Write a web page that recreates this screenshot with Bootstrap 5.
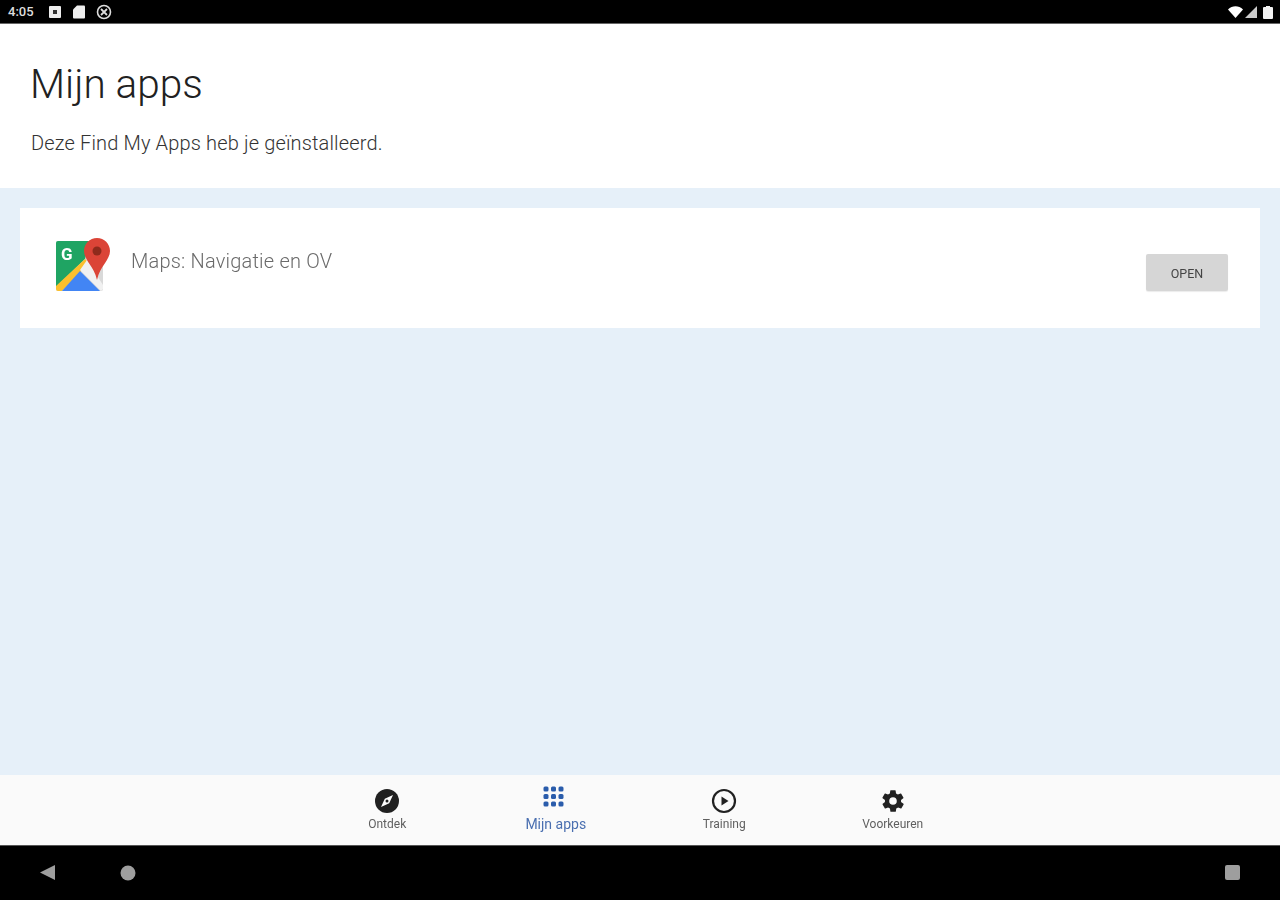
<!DOCTYPE html>
<html lang="nl">

<head>
    <meta charset="UTF-8">
    <meta name="viewport" content="width=device-width, initial-scale=1.0">
    <title>Mijn apps</title>
    <link href="https://cdn.jsdelivr.net/npm/bootstrap@5.3.0/dist/css/bootstrap.min.css" rel="stylesheet">
    <style>
        html, body { height: 900px; overflow: hidden; }
        body { font-family: Roboto, "Liberation Sans", sans-serif; background: #e6f0f9; color: #212121; }
        .screen { height: 900px; filter: blur(.7px); }
        .status-bar { height: 24px; background: #000; color: #ddd; font-size: 13px; font-weight: 500; padding: 0 7px 0 8px; box-shadow: inset 0 -1px 0 #666; }
        .status-time { width: 27px; }
        .status-left { gap: 10px; }
        .status-first { margin-left: 3px; }
        .status-right { gap: 2px; }
        .status-batt { margin-left: 4px; }
        .page-head { height: 164px; padding: 39px 31px 0; }
        .page-title { font-size: 40.5px; font-weight: 300; line-height: 42px; margin: 0 0 26px -1px; color: #212121; }
        .page-sub { font-size: 20px; font-weight: 300; line-height: 24px; margin: 0; color: #333; letter-spacing: .15px; }
        .app-area { padding: 20px 20px 0; }
        .app-card { height: 120px; border: 0; border-radius: 0; padding: 30px 32px 0 35px; }
        .app-logo { overflow: visible; }
        .app-name { font-size: 20px; font-weight: 300; color: #6a6a6a; margin: 11px 0 0 21px; letter-spacing: .2px; line-height: 24px; }
        .open-btn { width: 82px; height: 37px; margin-top: 16px; background: #d6d6d6; border: 0; border-radius: 2px; font-size: 12.5px; line-height: 39px; color: #444; padding: 0; box-shadow: 0 1px 1px rgba(0,0,0,.08); }
        .tab-bar { height: 70px; background: #fafafa; }
        .tab-item { width: 168.5px; padding-top: 13px; font-size: 12px; color: #5f5f5f; line-height: 14px; }
        .tab-item svg { display: block; height: 26px; margin-bottom: 3px; }
        .tab-active { color: #4a6fb0; font-size: 14px; padding-top: 11px; }
        .tab-active svg { margin-right: 4px; margin-bottom: 5px; }
        .nav-keys { height: 55px; background: #000; padding: 0 39px; box-shadow: inset 0 1px 0 #555; }
        .nav-home { margin-left: 64px; }
    </style>
</head>

<body>
    <div class="screen d-flex flex-column">
        <div class="status-bar d-flex align-items-center justify-content-between">
            <div class="status-left d-flex align-items-center">
                <span class="status-time">4:05</span>
                <svg class="status-first" width="14" height="14" viewBox="0 0 14 14"><rect x="1" y="1" width="12" height="12" rx="1" fill="#eee"/><rect x="5" y="5" width="4" height="4" fill="#333"/></svg>
                <svg width="14" height="14" viewBox="0 0 14 14"><path d="M5 .5h7a1 1 0 0 1 1 1v11a1 1 0 0 1-1 1H2a1 1 0 0 1-1-1V4.500z" fill="#eee"/></svg>
                <svg width="16" height="16" viewBox="0 0 16 16"><circle cx="8" cy="8" r="6.500" fill="none" stroke="#ddd" stroke-width="1.600"/><path d="M5 5l6 6M11 5l-6 6" stroke="#ddd" stroke-width="1.800"/></svg>
            </div>
            <div class="status-right d-flex align-items-center">
                <svg width="15" height="12" viewBox="0 0 15 12"><path d="M0 3.500C4.300-.8 10.700-.8 15 3.500L7.500 12z" fill="#fff"/></svg>
                <svg width="12" height="12" viewBox="0 0 12 12"><path d="M12 0v12H0z" fill="#ccc"/></svg>
                <svg class="status-batt" width="10" height="13" viewBox="0 0 10 13"><path d="M3 0h4v1h2a1 1 0 0 1 1 1v10a1 1 0 0 1-1 1H1a1 1 0 0 1-1-1V2a1 1 0 0 1 1-1h2z" fill="#f2f2f2"/></svg>
            </div>
        </div>

        <div class="page-head bg-white">
            <h1 class="page-title">Mijn apps</h1>
            <p class="page-sub">Deze Find My Apps heb je geïnstalleerd.</p>
        </div>

        <div class="app-area flex-grow-1">
            <div class="card app-card flex-row align-items-start">
                <svg width="55" height="54" viewBox="0 0 55 54" class="app-logo flex-shrink-0">
                    <rect x="1" y="3" width="47" height="50" rx="2" fill="#d9d9d9"/>
                    <path d="M3 3h31l-4 18L1 49V5a2 2 0 0 1 2-2z" fill="#1fa463"/>
                    <path d="M30 21l4 4L7 53H3a2 2 0 0 1-2-2v-3z" fill="#fbc02d"/>
                    <path d="M25 33l20 20H7z" fill="#4285f4"/>
                    <path d="M32 22l16 25v4l-2 2-21-21z" fill="#f1f1f1"/>
                    <path d="M42 0c-7.300 0-13 5.700-13 13 0 9 10 15 13 29 3-14 13-20 13-29 0-7.300-5.700-13-13-13z" fill="#db4437"/>
                    <circle cx="42" cy="13" r="4.500" fill="#8e2a1c"/>
                    <text x="6" y="22" font-family="Roboto, sans-serif" font-size="17" font-weight="700" fill="#fff">G</text>
                </svg>
                <div class="app-name flex-grow-1">Maps: Navigatie en OV</div>
                <button class="btn open-btn" type="button">OPEN</button>
            </div>
        </div>

        <div class="tab-bar d-flex justify-content-center">
            <div class="tab-item d-flex flex-column align-items-center">
                <svg width="26" height="26" viewBox="0 0 26 26"><circle cx="13" cy="13" r="12" fill="#212121"/><path d="M19 7 15.200 15.200 7 19l3.800-8.200z" fill="#fff"/><circle cx="13" cy="13" r="1.500" fill="#212121"/></svg>
                <span>Ontdek</span>
            </div>
            <div class="tab-item tab-active d-flex flex-column align-items-center">
                <svg width="22" height="26" viewBox="0 0 22 26" fill="#2a5cab"><rect x=".5" y=".5" width="5" height="5" rx="1.500"/><rect x="8" y=".5" width="5" height="5" rx="1.500"/><rect x="15.500" y=".5" width="5" height="5" rx="1.500"/><rect x=".5" y="8" width="5" height="5" rx="1.500"/><rect x="8" y="8" width="5" height="5" rx="1.500"/><rect x="15.500" y="8" width="5" height="5" rx="1.500"/><rect x=".5" y="15.500" width="5" height="5" rx="1.500"/><rect x="8" y="15.500" width="5" height="5" rx="1.500"/><rect x="15.500" y="15.500" width="5" height="5" rx="1.500"/></svg>
                <span>Mijn apps</span>
            </div>
            <div class="tab-item d-flex flex-column align-items-center">
                <svg width="26" height="26" viewBox="0 0 26 26"><circle cx="13" cy="13" r="11" fill="none" stroke="#212121" stroke-width="2.200"/><path d="M10.500 8.500 17.500 13l-7 4.500z" fill="#212121"/></svg>
                <span>Training</span>
            </div>
            <div class="tab-item d-flex flex-column align-items-center">
                <svg width="26" height="26" viewBox="0 0 24 24"><path fill="#212121" fill-rule="evenodd" d="M19.400 13a7.500 7.500 0 0 0 0-2l2.100-1.600a.5.500 0 0 0 .1-.6l-2-3.500a.5.500 0 0 0-.6-.2l-2.500 1a7.300 7.300 0 0 0-1.700-1l-.4-2.700A.5.500 0 0 0 14 2h-4a.5.500 0 0 0-.5.400l-.4 2.700a7.700 7.700 0 0 0-1.700 1l-2.500-1a.5.500 0 0 0-.6.200l-2 3.500a.5.500 0 0 0 .1.600L4.600 11a7.900 7.900 0 0 0 0 2l-2.100 1.600a.5.500 0 0 0-.1.600l2 3.500c.1.200.4.300.6.200l2.500-1c.5.400 1.100.7 1.700 1l.4 2.700c0 .2.200.4.500.4h4c.2 0 .4-.2.500-.4l.4-2.700a7.300 7.300 0 0 0 1.700-1l2.500 1c.2.100.5 0 .6-.2l2-3.500a.5.500 0 0 0-.1-.6zM12 15.500a3.500 3.500 0 1 1 0-7 3.500 3.500 0 0 1 0 7z"/></svg>
                <span>Voorkeuren</span>
            </div>
        </div>

        <div class="nav-keys d-flex align-items-center">
            <svg width="17" height="17" viewBox="0 0 17 17"><path d="M16 1v15L1 8.500z" fill="#9e9e9e"/></svg>
            <svg class="nav-home" width="16" height="16" viewBox="0 0 16 16"><circle cx="8" cy="8" r="7.500" fill="#9e9e9e"/></svg>
            <svg class="ms-auto" width="17" height="17" viewBox="0 0 17 17"><rect x="1" y="1" width="15" height="15" rx="2" fill="#9e9e9e"/></svg>
        </div>
    </div>
    <script src="https://cdn.jsdelivr.net/npm/bootstrap@5.3.0/dist/js/bootstrap.bundle.min.js"></script>
</body>

</html>
